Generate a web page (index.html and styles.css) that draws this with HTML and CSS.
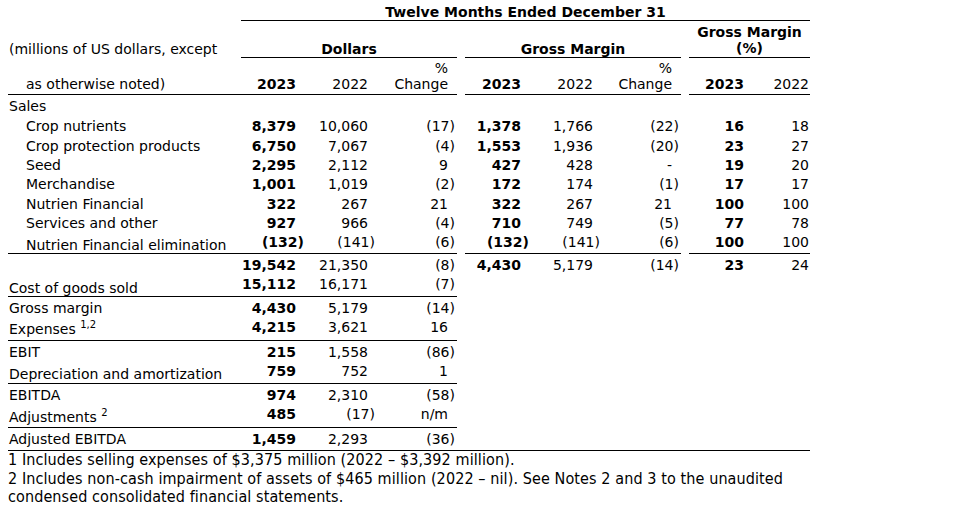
FILE: index.html
```html
<!DOCTYPE html>
<html>
<head>
<meta charset="utf-8">
<link rel="stylesheet" href="styles.css">
</head>
<body>
<div class="page">
<table class="fin">
  <colgroup>
    <col class="c-label"><col class="c-d23"><col class="c-d22"><col class="c-dch"><col class="c-gap">
    <col class="c-g23"><col class="c-g22"><col class="c-gch"><col class="c-gap"><col class="c-p23"><col class="c-p22">
  </colgroup>
  <thead>
    <tr class="h1">
      <td></td>
      <td colspan="10" class="title ul">Twelve Months Ended December 31</td>
    </tr>
    <tr class="h2">
      <td class="lbl">(millions of US dollars, except</td>
      <td colspan="3" class="grp ul">Dollars</td>
      <td></td>
      <td colspan="3" class="grp ul">Gross Margin</td>
      <td></td>
      <td colspan="2" class="grp pct ul">Gross Margin<br>(%)</td>
    </tr>
    <tr class="h3">
      <td class="lbl ind ul">as otherwise noted)</td>
      <td class="n d23 b ul">2023</td>
      <td class="n d22 ul">2022</td>
      <td class="n ch ul">%<br>Change</td>
      <td></td>
      <td class="n d23 b ul">2023</td>
      <td class="n d22 ul">2022</td>
      <td class="n ch ul">%<br>Change</td>
      <td></td>
      <td class="n d23 b ul">2023</td>
      <td class="n last ul">2022</td>
    </tr>
  </thead>
  <tbody>
    <tr class="r21"><td class="lbl">Sales</td><td></td><td></td><td></td><td></td><td></td><td></td><td></td><td></td><td></td><td></td></tr>
    <tr class="r20">
      <td class="lbl ind">Crop nutrients</td>
      <td class="n d23 b">8,379</td><td class="n d22">10,060</td><td class="n ch"><span class="neg">(17)</span></td><td></td>
      <td class="n d23 b">1,378</td><td class="n d22">1,766</td><td class="n ch"><span class="neg">(22)</span></td><td></td>
      <td class="n d23 b">16</td><td class="n last">18</td>
    </tr>
    <tr class="r19">
      <td class="lbl ind">Crop protection products</td>
      <td class="n d23 b">6,750</td><td class="n d22">7,067</td><td class="n ch"><span class="neg">(4)</span></td><td></td>
      <td class="n d23 b">1,553</td><td class="n d22">1,936</td><td class="n ch"><span class="neg">(20)</span></td><td></td>
      <td class="n d23 b">23</td><td class="n last">27</td>
    </tr>
    <tr class="r19">
      <td class="lbl ind">Seed</td>
      <td class="n d23 b">2,295</td><td class="n d22">2,112</td><td class="n ch">9</td><td></td>
      <td class="n d23 b">427</td><td class="n d22">428</td><td class="n ch">-</td><td></td>
      <td class="n d23 b">19</td><td class="n last">20</td>
    </tr>
    <tr class="r20">
      <td class="lbl ind">Merchandise</td>
      <td class="n d23 b">1,001</td><td class="n d22">1,019</td><td class="n ch"><span class="neg">(2)</span></td><td></td>
      <td class="n d23 b">172</td><td class="n d22">174</td><td class="n ch"><span class="neg">(1)</span></td><td></td>
      <td class="n d23 b">17</td><td class="n last">17</td>
    </tr>
    <tr class="r19">
      <td class="lbl ind">Nutrien Financial</td>
      <td class="n d23 b">322</td><td class="n d22">267</td><td class="n ch">21</td><td></td>
      <td class="n d23 b">322</td><td class="n d22">267</td><td class="n ch">21</td><td></td>
      <td class="n d23 b">100</td><td class="n last">100</td>
    </tr>
    <tr class="r19">
      <td class="lbl ind">Services and other</td>
      <td class="n d23 b">927</td><td class="n d22">966</td><td class="n ch"><span class="neg">(4)</span></td><td></td>
      <td class="n d23 b">710</td><td class="n d22">749</td><td class="n ch"><span class="neg">(5)</span></td><td></td>
      <td class="n d23 b">77</td><td class="n last">78</td>
    </tr>
    <tr class="r22 elim">
      <td class="lbl ind ul">Nutrien Financial elimination</td>
      <td class="n d23 b ul"><span class="neg">(132)</span></td><td class="n d22 ul"><span class="neg">(141)</span></td><td class="n ch ul"><span class="neg">(6)</span></td><td></td>
      <td class="n d23 b ul"><span class="neg">(132)</span></td><td class="n d22 ul"><span class="neg">(141)</span></td><td class="n ch ul"><span class="neg">(6)</span></td><td></td>
      <td class="n d23 b ul">100</td><td class="n last ul">100</td>
    </tr>
    <tr class="r22">
      <td class="lbl"></td>
      <td class="n d23 b">19,542</td><td class="n d22">21,350</td><td class="n ch"><span class="neg">(8)</span></td><td></td>
      <td class="n d23 b">4,430</td><td class="n d22">5,179</td><td class="n ch"><span class="neg">(14)</span></td><td></td>
      <td class="n d23 b">23</td><td class="n last">24</td>
    </tr>
    <tr class="r21 cogs">
      <td class="lbl ul">Cost of goods sold</td>
      <td class="n d23 b ul">15,112</td><td class="n d22 ul">16,171</td><td class="n ch ul"><span class="neg">(7)</span></td>
      <td></td><td></td><td></td><td></td><td></td><td></td><td></td>
    </tr>
    <tr class="r22">
      <td class="lbl">Gross margin</td>
      <td class="n d23 b">4,430</td><td class="n d22">5,179</td><td class="n ch"><span class="neg">(14)</span></td>
      <td></td><td></td><td></td><td></td><td></td><td></td><td></td>
    </tr>
    <tr class="r21 exp">
      <td class="lbl ul">Expenses <sup>1,2</sup></td>
      <td class="n d23 b ul">4,215</td><td class="n d22 ul">3,621</td><td class="n ch ul">16</td>
      <td></td><td></td><td></td><td></td><td></td><td></td><td></td>
    </tr>
    <tr class="r22">
      <td class="lbl">EBIT</td>
      <td class="n d23 b">215</td><td class="n d22">1,558</td><td class="n ch"><span class="neg">(86)</span></td>
      <td></td><td></td><td></td><td></td><td></td><td></td><td></td>
    </tr>
    <tr class="r21 da">
      <td class="lbl ul">Depreciation and amortization</td>
      <td class="n d23 b ul">759</td><td class="n d22 ul">752</td><td class="n ch ul">1</td>
      <td></td><td></td><td></td><td></td><td></td><td></td><td></td>
    </tr>
    <tr class="r22">
      <td class="lbl">EBITDA</td>
      <td class="n d23 b">974</td><td class="n d22">2,310</td><td class="n ch"><span class="neg">(58)</span></td>
      <td></td><td></td><td></td><td></td><td></td><td></td><td></td>
    </tr>
    <tr class="r21 adj">
      <td class="lbl ul">Adjustments <sup>2</sup></td>
      <td class="n d23 b ul">485</td><td class="n d22 ul"><span class="neg">(17)</span></td><td class="n ch ul">n/m</td>
      <td></td><td></td><td></td><td></td><td></td><td></td><td></td>
    </tr>
    <tr class="r23 total">
      <td class="lbl">Adjusted EBITDA</td>
      <td class="n d23 b">1,459</td><td class="n d22">2,293</td><td class="n ch"><span class="neg">(36)</span></td>
      <td></td><td></td><td></td><td></td><td></td><td></td><td></td>
    </tr>
  </tbody>
</table>
<div class="notes">
  <p class="note">1 Includes selling expenses of $3,375 million (2022 – $3,392 million).</p>
  <p class="note">2 Includes non-cash impairment of assets of $465 million (2022 – nil). See Notes 2 and 3 to the unaudited<br>condensed consolidated financial statements.</p>
</div>
</div>
</body>
</html>
```
FILE: styles.css
```css
html, body {
  margin: 0;
  padding: 0;
  background: #fff;
  color: #000;
}
.page {
  padding-left: 8px;
  width: 802px;
}
.fin {
  border-collapse: separate;
  border-spacing: 0;
  table-layout: fixed;
  width: 802px;
  font-family: "DejaVu Sans", Verdana, sans-serif;
  font-size: 14px;
  line-height: 16px;
}
.fin td {
  padding: 0;
  white-space: nowrap;
  vertical-align: middle;
}
.c-label { width: 233px; }
.c-d23 { width: 63px; }
.c-d22 { width: 72px; }
.c-dch { width: 81px; }
.c-gap { width: 8px; }
.c-g23 { width: 64px; }
.c-g22 { width: 72px; }
.c-gch { width: 80px; }
.c-p23 { width: 63px; }
.c-p22 { width: 58px; }

.ul { border-bottom: 1px solid #000; }
.b { font-weight: bold; }

.h1 { height: 21px; }
.h2 { height: 37px; }
.h3 { height: 37px; }
.h1 td, .h2 td, .h3 td { vertical-align: bottom; }
.title { text-align: center; font-weight: bold; }
.grp { text-align: center; font-weight: bold; padding-bottom: 0; }
.grp.pct { padding-bottom: 1px; }
.h2 .lbl { padding-bottom: 1px; }
.h3 td { padding-bottom: 2px; }

.lbl { padding-left: 1px !important; }
.lbl.ind { padding-left: 18px !important; }

.n { text-align: right; }
.d23 { padding-right: 8px !important; }
.d22 { padding-right: 8px !important; }
.ch { padding-right: 9px !important; }
.last { padding-right: 1px !important; }

.neg { margin-right: -7px; }
.b .neg { margin-right: -8px; }

.r19 { height: 19px; }
.r20 { height: 20px; }
.r21 { height: 21px; }
.r22 { height: 22px; }
.r23 { height: 23px; }

.elim .lbl { padding-top: 4px; }
.elim .n { padding-bottom: 1px; }
.cogs .lbl { padding-top: 3px; }
.cogs .n { padding-bottom: 4px; }
.exp .lbl { padding-bottom: 2px; }
.exp .n { padding-bottom: 5px; }
.da .lbl { padding-top: 1px; }
.da .n { padding-bottom: 4px; }
.adj .n { padding-bottom: 5px; }

.total td { border-bottom: 1px solid #000; }

sup {
  font-size: 10px;
  line-height: 0;
  vertical-align: 6px;
}

.notes {
  font-family: "DejaVu Sans Condensed", Tahoma, sans-serif;
  font-size: 16px;
  letter-spacing: 0.1px;
  line-height: 18.5px;
  padding-top: 0;
}
.note {
  margin: 0;
}
```
